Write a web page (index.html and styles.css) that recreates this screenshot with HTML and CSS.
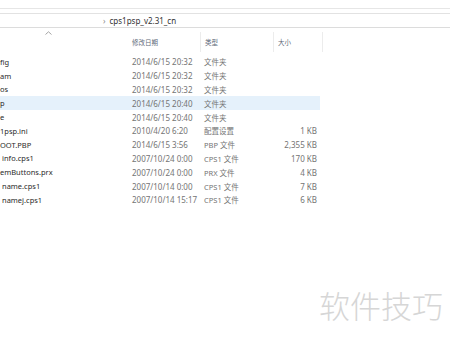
FILE: index.html
```html
<!DOCTYPE html>
<html lang="zh-CN">
<head>
    <meta charset="UTF-8">
    <title>cps1psp_v2.31_cn</title>
    <link rel="stylesheet" href="styles.css">
</head>
<body>
    <div class="explorer">
        <div class="ribbon"></div>
        <div class="address">
            <span class="crumb-arrow">›</span>
            <span class="crumb">cps1psp_v2.31_cn</span>
        </div>

        <div class="header">
            <div class="col name">
                <svg class="sort" width="7" height="4" viewBox="0 0 7 4"><path d="M0.5 3.5 L3.5 0.8 L6.5 3.5" fill="none" stroke="#9a9a9a" stroke-width="0.9"/></svg>
            </div>
            <div class="col date">修改日期</div>
            <div class="col type">类型</div>
            <div class="col size">大小</div>
            <div class="col rest"></div>
        </div>

        <div class="rows">
            <div class="row"><span class="name">fig</span><span class="date">2014/6/15 20:32</span><span class="type">文件夹</span><span class="size"></span></div>
            <div class="row"><span class="name">am</span><span class="date">2014/6/15 20:32</span><span class="type">文件夹</span><span class="size"></span></div>
            <div class="row"><span class="name">os</span><span class="date">2014/6/15 20:32</span><span class="type">文件夹</span><span class="size"></span></div>
            <div class="row selected"><span class="name">p</span><span class="date">2014/6/15 20:40</span><span class="type">文件夹</span><span class="size"></span></div>
            <div class="row"><span class="name">e</span><span class="date">2014/6/15 20:40</span><span class="type">文件夹</span><span class="size"></span></div>
            <div class="row"><span class="name">1psp.ini</span><span class="date">2010/4/20 6:20</span><span class="type">配置设置</span><span class="size">1 KB</span></div>
            <div class="row"><span class="name">OOT.PBP</span><span class="date">2014/6/15 3:56</span><span class="type">PBP 文件</span><span class="size">2,355 KB</span></div>
            <div class="row"><span class="name shift">info.cps1</span><span class="date">2007/10/24 0:00</span><span class="type">CPS1 文件</span><span class="size">170 KB</span></div>
            <div class="row"><span class="name">emButtons.prx</span><span class="date">2007/10/24 0:00</span><span class="type">PRX 文件</span><span class="size">4 KB</span></div>
            <div class="row"><span class="name shift">name.cps1</span><span class="date">2007/10/14 0:00</span><span class="type">CPS1 文件</span><span class="size">7 KB</span></div>
            <div class="row"><span class="name shift">namej.cps1</span><span class="date">2007/10/14 15:17</span><span class="type">CPS1 文件</span><span class="size">6 KB</span></div>
        </div>
    </div>

    <div class="watermark">软件技巧</div>
</body>
</html>
```

FILE: styles.css
```css
body {
    margin: 0;
    width: 450px;
    height: 339px;
    overflow: hidden;
    background: #fff;
    font-family: "Noto Sans", "Noto Sans CJK SC", sans-serif;
    position: relative;
}

.ribbon {
    height: 8px;
    border-bottom: 1px solid #e6e6e6;
    margin-bottom: 4px;
}

.address {
    height: 13px;
    border-top: 1px solid #e2e2e2;
    border-bottom: 1px solid #dcdcdc;
    display: flex;
    align-items: center;
    padding-left: 103px;
    font-size: 8px;
    color: #333;
}

.crumb-arrow {
    color: #888;
    font-size: 8px;
    margin-right: 4px;
}

.header {
    display: grid;
    grid-template-columns: 126px 74px 73px 49px 1fr;
    height: 27px;
}

.header .col {
    display: flex;
    align-items: center;
    font-family: "Noto Sans CJK SC", sans-serif;
    font-size: 6.5px;
    color: #5f6b7a;
}

.header .name {
    position: relative;
}

.sort {
    position: absolute;
    left: 45px;
    top: 3px;
}

.header .date {
    padding-left: 6px;
}

.header .type,
.header .size,
.header .rest {
    border-left: 1px solid #ececec;
    margin: 4px 0 3px;
    padding-left: 4px;
}

.rows {
    width: 320px;
}

.row {
    display: grid;
    grid-template-columns: 126px 74px 73px 44px;
    height: 13.8px;
    align-items: center;
    font-size: 8px;
}

.row.selected {
    background: #e5f1fb;
}

.row .name {
    color: #2a2a2a;
    font-size: 7.5px;
    white-space: nowrap;
}

.row .name.shift {
    padding-left: 2px;
}

.row .date {
    color: #747474;
    padding-left: 6px;
}

.row .type {
    color: #747474;
    padding-left: 4px;
    font-size: 7.5px;
    white-space: nowrap;
}

.row .size {
    color: #747474;
    text-align: right;
}

.watermark {
    position: absolute;
    left: 319px;
    top: 282px;
    font-family: "Noto Sans CJK SC", sans-serif;
    font-size: 31px;
    font-weight: 300;
    color: #d6d6d6;
}
```
